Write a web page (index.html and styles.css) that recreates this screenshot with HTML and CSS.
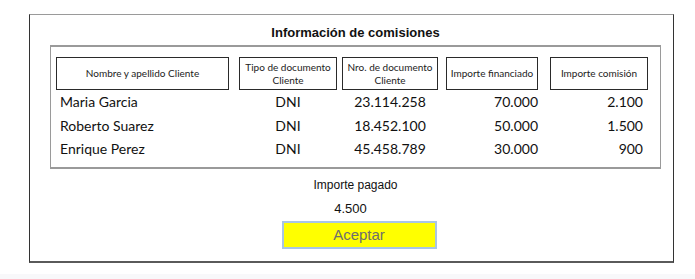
FILE: index.html
```html
<!DOCTYPE html>
<html lang="es">
<head>
    <meta charset="UTF-8">
    <meta name="viewport" content="width=device-width, initial-scale=1.0">
    <title>Información de comisiones</title>
    <link rel="stylesheet" href="styles.css">
</head>
<body>
    <div class="panel">
        <h1 class="titulo">Información de comisiones</h1>

        <div class="tabla">
            <div class="fila cabecera">
                <div class="celda c1">Nombre y apellido Cliente</div>
                <div class="celda c2">Tipo de documento Cliente</div>
                <div class="celda c3">Nro. de documento Cliente</div>
                <div class="celda c4">Importe financiado</div>
                <div class="celda c5">Importe comisión</div>
            </div>
            <div class="fila dato">
                <div class="c1 izq">Maria Garcia</div>
                <div class="c2 centro">DNI</div>
                <div class="c3 centro">23.114.258</div>
                <div class="c4 der">70.000</div>
                <div class="c5 der">2.100</div>
            </div>
            <div class="fila dato">
                <div class="c1 izq">Roberto Suarez</div>
                <div class="c2 centro">DNI</div>
                <div class="c3 centro">18.452.100</div>
                <div class="c4 der">50.000</div>
                <div class="c5 der">1.500</div>
            </div>
            <div class="fila dato">
                <div class="c1 izq">Enrique Perez</div>
                <div class="c2 centro">DNI</div>
                <div class="c3 centro">45.458.789</div>
                <div class="c4 der">30.000</div>
                <div class="c5 der">900</div>
            </div>
        </div>

        <div class="pago">
            <div class="pago-label">Importe pagado</div>
            <div class="pago-valor">4.500</div>
            <button class="aceptar">Aceptar</button>
        </div>
    </div>
    <div class="pie"></div>
</body>
</html>
```

FILE: styles.css
```css
body {
    margin: 0;
    padding-top: 14px;
    background: #fff;
    font-family: "Liberation Sans", Arial, sans-serif;
    color: #111;
}
.panel {
    margin-left: 29px;
    width: 611px;
    border: 1px solid #333;
    border-top-color: #9a9a9a;
    border-bottom: 2px solid #5a5a5a;
    padding: 0 12px 12px 20px;
}
.titulo {
    margin: 10px 0 4px;
    font-size: 13px;
    line-height: 16px;
    text-align: center;
    color: #111;
}
.tabla {
    border: 1px solid #9a9a9a;
    border-top-width: 2px;
    border-bottom-width: 2px;
    padding: 10px 0 6px 5px;
    font-family: Lato, "Open Sans", sans-serif;
}
.fila {
    display: grid;
    grid-template-columns: 183px 103px 104px 104px 98px;
}
.celda {
    height: 33px;
    box-sizing: border-box;
    border: 1px solid #2a2a2a;
    display: flex;
    align-items: center;
    justify-content: center;
    text-align: center;
    font-size: 10px;
    line-height: 12.5px;
    color: #222;
    padding: 0 1px;
}
.c1 { width: 173px; }
.c2 { width: 98px; }
.c3 { width: 96px; }
.c4 { width: 92px; }
.c5 { width: 98px; }
.celda.c4 { white-space: nowrap; }
.dato {
    font-size: 14px;
    line-height: 23.5px;
    color: #111;
}
.izq { padding-left: 4px; box-sizing: border-box; }
.centro { text-align: center; }
.der { text-align: right; box-sizing: border-box; }
.c5.der { padding-right: 5px; }
.pago {
    display: flex;
    flex-direction: column;
    align-items: center;
}
.pago-label {
    margin-top: 9px;
    font-size: 12px;
    line-height: 14px;
}
.pago-valor {
    margin-top: 9.5px;
    margin-right: 10px;
    font-size: 13px;
    line-height: 15px;
}
.aceptar {
    margin-top: 4.5px;
    margin-left: 7px;
    width: 155px;
    height: 28px;
    background: #ffff00;
    border: 2px solid #a9c6e3;
    font-family: "Liberation Sans", Arial, sans-serif;
    font-size: 15px;
    color: #6e6e6e;
    padding: 0;
}
.pie {
    margin-top: 11px;
    height: 6px;
    background: #f8f8fa;
}
```
